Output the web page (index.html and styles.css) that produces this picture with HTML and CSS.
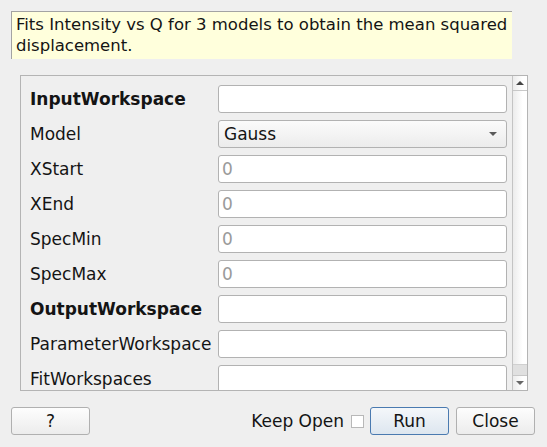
FILE: index.html
```html
<!DOCTYPE html>
<html>
<head>
<meta charset="utf-8">
<link rel="stylesheet" href="styles.css">
</head>
<body>
<div class="dialog">
  <div class="desc">Fits Intensity vs Q for 3 models to obtain the mean squared displacement.</div>
  <div class="scroll">
    <div class="props">
      <div class="label bold">InputWorkspace</div><div class="field"></div>
      <div class="label">Model</div><div class="field combo"><span>Gauss</span><span class="caret"></span></div>
      <div class="label">XStart</div><div class="field"><span class="ph">0</span></div>
      <div class="label">XEnd</div><div class="field"><span class="ph">0</span></div>
      <div class="label">SpecMin</div><div class="field"><span class="ph">0</span></div>
      <div class="label">SpecMax</div><div class="field"><span class="ph">0</span></div>
      <div class="label bold">OutputWorkspace</div><div class="field"></div>
      <div class="label">ParameterWorkspace</div><div class="field"></div>
      <div class="label">FitWorkspaces</div><div class="field"></div>
    </div>
    <div class="vbar">
      <div class="arrow up"><span class="tri-up"></span></div>
      <div class="trough"></div>
      <div class="handle"></div>
      <div class="arrow down"><span class="tri-down"></span></div>
    </div>
  </div>
  <div class="buttons">
    <button class="btn">?</button>
    <div class="spacer"></div>
    <span class="keep">Keep Open</span>
    <span class="check"></span>
    <button class="btn default">Run</button>
    <button class="btn">Close</button>
  </div>
</div>
</body>
</html>
```
FILE: styles.css
```css
html, body {
  margin: 0;
  padding: 0;
  background: #efefef;
  font-family: "DejaVu Sans", sans-serif;
  font-size: 17px;
  color: #141414;
}
.dialog {
  width: 547px;
  height: 447px;
  box-sizing: border-box;
  padding: 11px 12px 0 11px;
  position: relative;
}
.desc {
  width: 501px;
  height: 48px;
  box-sizing: border-box;
  background: #ffffdc;
  border-top: 1px solid #a3a3a3;
  border-left: 1px solid #a3a3a3;
  padding: 2px 0 0 4px;
  line-height: 21px;
  font-size: 16.5px;
}
.scroll {
  margin: 16px 0 0 9px;
  width: 508px;
  height: 316px;
  box-sizing: border-box;
  border: 1px solid #b4b4b4;
  display: flex;
  overflow: hidden;
}
.props {
  flex: 1;
  display: grid;
  grid-template-columns: 188px 1fr;
  grid-auto-rows: 28px;
  row-gap: 7px;
  padding: 9px 5px 0 9px;
  align-items: center;
}
.label {
  line-height: 28px;
  white-space: nowrap;
}
.bold { font-weight: bold; }
.field {
  height: 28px;
  box-sizing: border-box;
  border: 1px solid #b2b2b2;
  border-radius: 3px;
  background: #ffffff;
  display: flex;
  align-items: center;
  padding-left: 3px;
}
.ph { color: #9a9a9a; }
.combo {
  background: linear-gradient(#fbfbfb, #ececec);
  padding-left: 5px;
  justify-content: space-between;
  padding-right: 9px;
}
.caret {
  width: 0; height: 0;
  border-left: 4px solid transparent;
  border-right: 4px solid transparent;
  border-top: 4px solid #5a5a5a;
}
.vbar {
  width: 14px;
  border-left: 1px solid #c4c4c4;
  display: flex;
  flex-direction: column;
  background: linear-gradient(to right, #ececec, #ffffff 70%);
}
.arrow {
  height: 14px;
  display: flex;
  align-items: center;
  justify-content: center;
}
.arrow.up { border-bottom: 1px solid #c8c8c8; }
.arrow.down { border-top: 1px solid #c8c8c8; }
.trough { flex: 1; }
.handle {
  height: 10px;
  background: #e0e0e0;
  border-top: 1px solid #d0d0d0;
}
.tri-up {
  width: 0; height: 0;
  border-left: 4px solid transparent;
  border-right: 4px solid transparent;
  border-bottom: 4px solid #444;
}
.tri-down {
  width: 0; height: 0;
  border-left: 4px solid transparent;
  border-right: 4px solid transparent;
  border-top: 4px solid #666;
}
.buttons {
  display: flex;
  align-items: center;
  margin-top: 16px;
  height: 28px;
}
.spacer { flex: 1; }
.btn {
  width: 79px;
  height: 28px;
  box-sizing: border-box;
  border: 1px solid #b0b0b0;
  border-radius: 3px;
  background: linear-gradient(#fdfdfd, #ececec);
  font-family: "DejaVu Sans", sans-serif;
  font-size: 17px;
  color: #141414;
  padding: 0;
  margin: 0;
}
.btn.default {
  border-color: #4a7ab0;
  background: linear-gradient(#f4f7fa, #dde6ef);
  margin-right: 7px;
}
.keep { margin-right: 7px; }
.check {
  width: 13px;
  height: 13px;
  box-sizing: border-box;
  border: 1px solid #b8b8b8;
  background: #fff;
  margin-right: 6px;
}
```
